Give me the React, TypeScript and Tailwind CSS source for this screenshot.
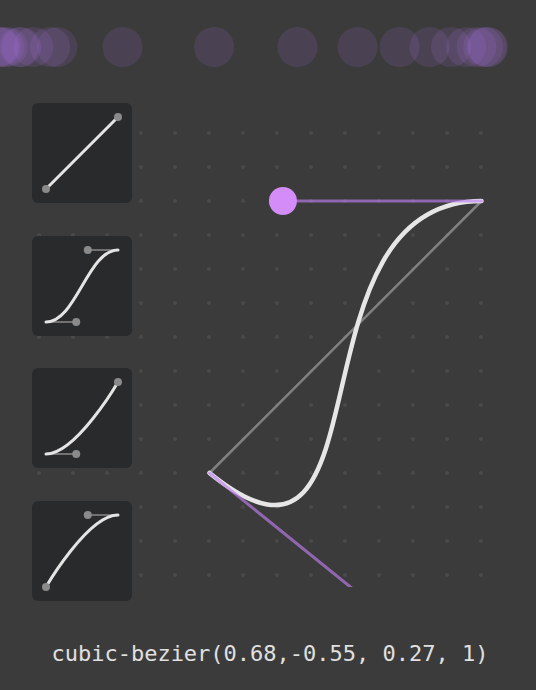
type Bezier = [number, number, number, number];

const CURVE: Bezier = [0.68, -0.55, 0.27, 1];

const PRESETS: Bezier[] = [
  [0, 0, 1, 1],
  [0.42, 0, 0.58, 1],
  [0.42, 0, 1, 1],
  [0, 0, 0.58, 1],
];

// one axis of a unit cubic bezier (p0 = 0, p3 = 1)
function axis(p1: number, p2: number, s: number) {
  const r = 1 - s;
  return 3 * r * r * s * p1 + 3 * r * s * s * p2 + s * s * s;
}

// progress of the easing at time t, solving x(s) = t by bisection
function ease(curve: Bezier, t: number) {
  const [x1, y1, x2, y2] = curve;
  let lo = 0;
  let hi = 1;
  for (let i = 0; i < 40; i++) {
    const mid = (lo + hi) / 2;
    if (axis(x1, x2, mid) < t) lo = mid;
    else hi = mid;
  }
  return axis(y1, y2, (lo + hi) / 2);
}

function curvePath(
  curve: Bezier,
  px: (v: number) => number,
  py: (v: number) => number,
) {
  const [x1, y1, x2, y2] = curve;
  return `M ${px(0)} ${py(0)} C ${px(x1)} ${py(y1)} ${px(x2)} ${py(y2)} ${px(1)} ${py(1)}`;
}

function Trail() {
  const from = 50;
  const to = 488;
  const frames = Array.from(
    { length: 21 },
    (_, i) => from + (to - from) * ease(CURVE, i / 20),
  );

  return (
    <svg width={536} height={94} className="block shrink-0">
      {frames.map((cx, i) => (
        <circle
          key={i}
          cx={cx}
          cy={47}
          r={20}
          fill="#be78ff"
          fillOpacity={0.12}
        />
      ))}
    </svg>
  );
}

function PresetCard({ curve }: { curve: Bezier }) {
  const [x1, y1, x2, y2] = curve;
  const px = (v: number) => 14 + v * 72;
  const py = (v: number) => 86 - v * 72;

  return (
    <div className="h-[100px] w-[100px] rounded-md bg-[#292a2c]">
      <svg width={100} height={100} className="block">
        <line
          x1={px(0)}
          y1={py(0)}
          x2={px(x1)}
          y2={py(y1)}
          stroke="#8a8a8a"
          strokeWidth={1.5}
        />
        <line
          x1={px(1)}
          y1={py(1)}
          x2={px(x2)}
          y2={py(y2)}
          stroke="#8a8a8a"
          strokeWidth={1.5}
        />
        <path
          d={curvePath(curve, px, py)}
          fill="none"
          stroke="#e4e4e4"
          strokeWidth={3}
          strokeLinecap="round"
        />
        <circle cx={px(x1)} cy={py(y1)} r={4} fill="#8a8a8a" />
        <circle cx={px(x2)} cy={py(y2)} r={4} fill="#8a8a8a" />
      </svg>
    </div>
  );
}

function Editor() {
  const [x1, y1, x2, y2] = CURVE;
  const px = (v: number) => 77.5 + v * 272;
  const py = (v: number) => 370 - v * 272;

  return (
    <svg width={366} height={484} className="block shrink-0 overflow-hidden">
      <line
        x1={px(0)}
        y1={py(0)}
        x2={px(1)}
        y2={py(1)}
        stroke="#808080"
        strokeWidth={2.5}
      />
      <path
        d={curvePath(CURVE, px, py)}
        fill="none"
        stroke="#e6e6e6"
        strokeWidth={4.5}
        strokeLinecap="round"
      />
      <line
        x1={px(0)}
        y1={py(0)}
        x2={px(x1)}
        y2={py(y1)}
        stroke="#c07ef0"
        strokeOpacity={0.65}
        strokeWidth={3}
        strokeLinecap="round"
      />
      <line
        x1={px(1)}
        y1={py(1)}
        x2={px(x2)}
        y2={py(y2)}
        stroke="#c07ef0"
        strokeOpacity={0.65}
        strokeWidth={3}
        strokeLinecap="round"
      />
      <circle cx={px(x1)} cy={py(y1)} r={14} fill="#d48cf8" />
      <circle cx={px(x2)} cy={py(y2)} r={14} fill="#d48cf8" />
    </svg>
  );
}

export default function App() {
  const [x1, y1, x2, y2] = CURVE;

  return (
    <div className="flex h-[690px] w-[536px] flex-col overflow-hidden bg-[#3b3b3b]">
      <Trail />

      <div className="mt-[9px] ml-[22px] flex h-[484px] w-[476px] shrink-0 bg-[radial-gradient(circle,#494949_1.5px,transparent_2.2px)] bg-[length:34px_34px] bg-[position:0px_13px] pl-[10px]">
        <div className="flex w-[100px] shrink-0 flex-col gap-[32.7px]">
          {PRESETS.map((preset, i) => (
            <PresetCard key={i} curve={preset} />
          ))}
        </div>
        <Editor />
      </div>

      <p className="mt-[53px] pl-[4px] text-center font-['DejaVu_Sans_Mono',monospace] text-[22px] leading-[28px] text-[#e0e0e0]">
        cubic-bezier({x1},{y1}, {x2}, {y2})
      </p>
    </div>
  );
}
